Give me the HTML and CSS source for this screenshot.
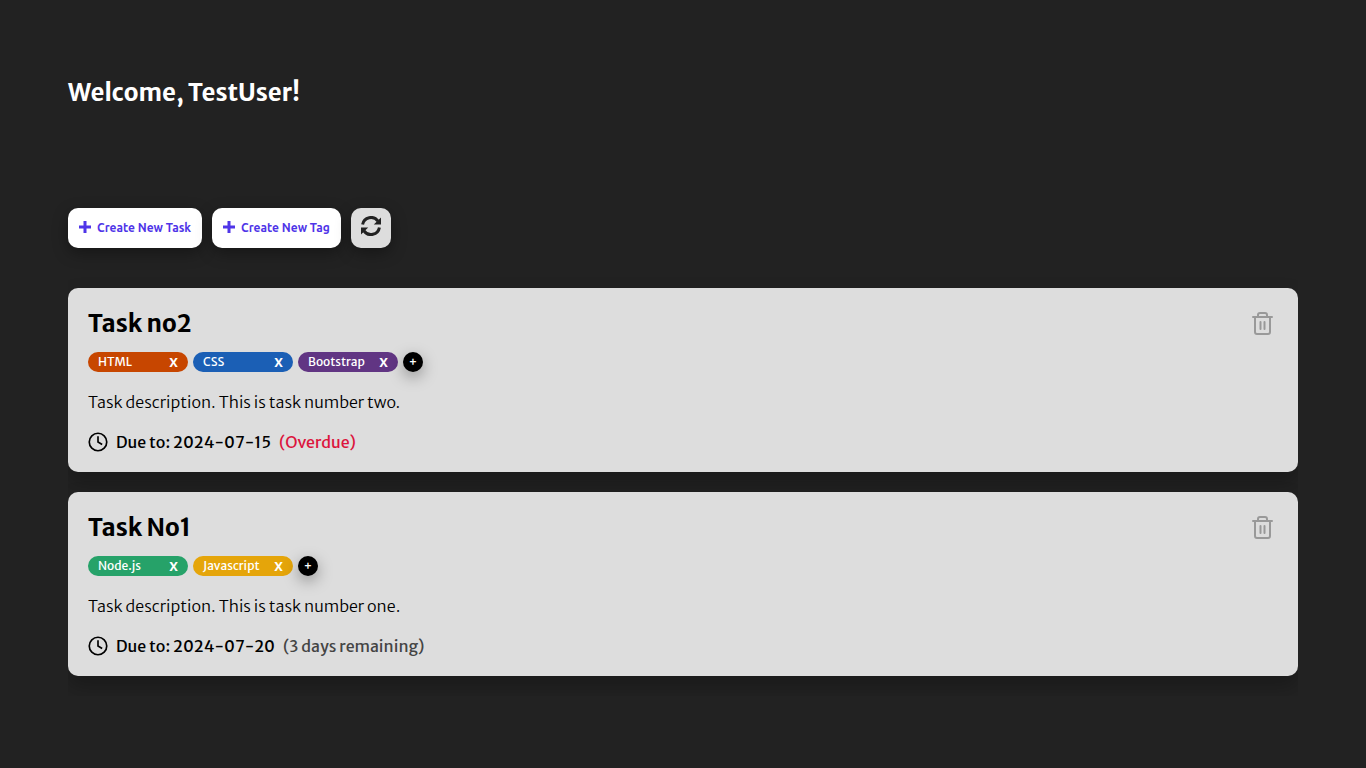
FILE: index.html
```html
<!DOCTYPE html>
<html lang="en">
<head>
<meta charset="utf-8">
<title>Tasks</title>
<link rel="stylesheet" href="styles.css">
</head>
<body>
<svg class="sprite" aria-hidden="true">
  <symbol id="plus" viewBox="0 0 12 12"><path d="M4.500 0h3v4.500H12v3H7.500V12h-3V7.500H0v-3h4.500z" fill="currentColor"/></symbol>
  <symbol id="clock" viewBox="0 0 24 24"><g fill="none" stroke="currentColor" stroke-width="2"><circle cx="12" cy="12" r="10.500"/><path d="M12 5v7l5 3"/></g></symbol>
  <symbol id="trash" viewBox="0 0 21 23"><g fill="none" stroke="currentColor" stroke-width="2" stroke-linecap="round" stroke-linejoin="round"><path d="M1 5h19M3 5v15a2 2 0 0 0 2 2h11a2 2 0 0 0 2-2V5M6 5V3a2 2 0 0 1 2-2h5a2 2 0 0 1 2 2v2M8.500 10v7M12.500 10v7"/></g></symbol>
  <symbol id="refresh" viewBox="0 0 20 20"><path d="M1.600 8.600A8.500 8.500 0 0 1 17 5.200M18.400 11.400A8.500 8.500 0 0 1 3 14.800" fill="none" stroke="currentColor" stroke-width="3"/><path d="M20 1.500v7.100h-7.200zM0 18.500v-7.100h7.200z" fill="currentColor"/></symbol>
</svg>
<main class="page">
  <h1 class="welcome">Welcome, TestUser!</h1>
  <div class="toolbar">
    <button class="create" type="button"><svg><use href="#plus"/></svg>Create New Task</button>
    <button class="create" type="button"><svg><use href="#plus"/></svg>Create New Tag</button>
    <button class="refresh" type="button" aria-label="Refresh"><svg><use href="#refresh"/></svg></button>
  </div>
  <section class="tasks" aria-label="Tasks">
    <article class="task">
      <header class="task-head"><h2>Task no2</h2><button class="delete" type="button" aria-label="Delete Task no2"><svg><use href="#trash"/></svg></button></header>
      <div class="tags">
        <span class="tag html">HTML<button type="button" aria-label="Remove HTML">X</button></span>
        <span class="tag css">CSS<button type="button" aria-label="Remove CSS">X</button></span>
        <span class="tag bootstrap">Bootstrap<button type="button" aria-label="Remove Bootstrap">X</button></span>
        <button class="add" type="button" aria-label="Add tag">+</button>
      </div>
      <p class="description">Task description. This is task number two.</p>
      <div class="due"><svg><use href="#clock"/></svg><span>Due to: 2024-07-15</span><span class="overdue">(Overdue)</span></div>
    </article>
    <article class="task">
      <header class="task-head"><h2>Task No1</h2><button class="delete" type="button" aria-label="Delete Task No1"><svg><use href="#trash"/></svg></button></header>
      <div class="tags">
        <span class="tag node">Node.js<button type="button" aria-label="Remove Node.js">X</button></span>
        <span class="tag javascript">Javascript<button type="button" aria-label="Remove Javascript">X</button></span>
        <button class="add" type="button" aria-label="Add tag">+</button>
      </div>
      <p class="description">Task description. This is task number one.</p>
      <div class="due"><svg><use href="#clock"/></svg><span>Due to: 2024-07-20</span><span class="remaining">(3 days remaining)</span></div>
    </article>
  </section>
</main>
</body>
</html>
```
FILE: styles.css
```css
* { box-sizing: border-box; }
body {
  margin: 0;
  background: #222;
  color: #000;
  font-family: "Merriweather Sans", "Open Sans", sans-serif;
  font-size: 16px;
}
.sprite { position: absolute; width: 0; height: 0; }
button { border: 0; padding: 0; font: inherit; cursor: pointer; }
h1, h2, p { margin: 0; }
.page { padding: 76px 68px 0; }
.welcome { color: #fff; font-size: 24px; line-height: 34px; font-weight: 600; }
.toolbar { display: flex; gap: 10px; margin-top: 98px; }
.create, .refresh {
  height: 40px;
  border-radius: 10px;
  box-shadow: 0 5px 15px rgba(0, 0, 0, .35);
}
.create {
  display: flex;
  align-items: center;
  gap: 6px;
  padding: 0 11px 2px;
  background: #fff;
  color: #4f35e8;
  font-family: Ubuntu, "Noto Sans", sans-serif;
  font-size: 12px;
  font-weight: 700;
}
.create svg { width: 12px; height: 12px; }
.refresh { width: 40px; background: #ddd; color: #222; }
.refresh svg { display: block; width: 20px; height: 20px; margin: -4px auto 0; }
.tasks { display: grid; gap: 20px; margin-top: 40px; padding-bottom: 20px; overflow-x: clip; }
.task {
  padding: 20px;
  background: #ddd;
  border-radius: 10px;
  box-shadow: 0 10px 20px rgba(0, 0, 0, .25);
}
.task-head { display: flex; justify-content: space-between; padding-right: 5px; }
.task-head h2 { font-size: 24px; line-height: 32px; font-weight: 700; }
.delete { padding-bottom: 1px; background: none; color: #999; }
.delete svg { display: block; width: 21px; height: 23px; }
.tags { display: flex; gap: 5px; margin-top: 12px; }
.tag {
  display: flex;
  align-items: center;
  justify-content: space-between;
  width: 100px;
  height: 20px;
  padding: 0 10px;
  border-radius: 10px;
  color: #fff;
  font-size: 12px;
  line-height: 20px;
}
.tag button { padding-top: 1px; background: none; color: #fff; font-size: 13px; font-weight: 700; }
.html { background: #c74600; }
.css { background: #1b5fb5; }
.bootstrap { background: #613583; }
.node { background: #26a269; }
.javascript { background: #e5a50a; }
.add {
  width: 20px;
  height: 20px;
  border-radius: 50%;
  background: #000;
  color: #fff;
  font-size: 13px;
  line-height: 20px;
  box-shadow: 0 5px 15px rgba(0, 0, 0, .35);
}
.description { margin-top: 20px; line-height: 20px; font-weight: 300; }
.due { display: flex; align-items: center; gap: 8px; margin-top: 20px; line-height: 20px; font-weight: 500; }
.due svg { width: 20px; height: 20px; }
.overdue { color: #dc143c; }
.remaining { color: #444; }
```
